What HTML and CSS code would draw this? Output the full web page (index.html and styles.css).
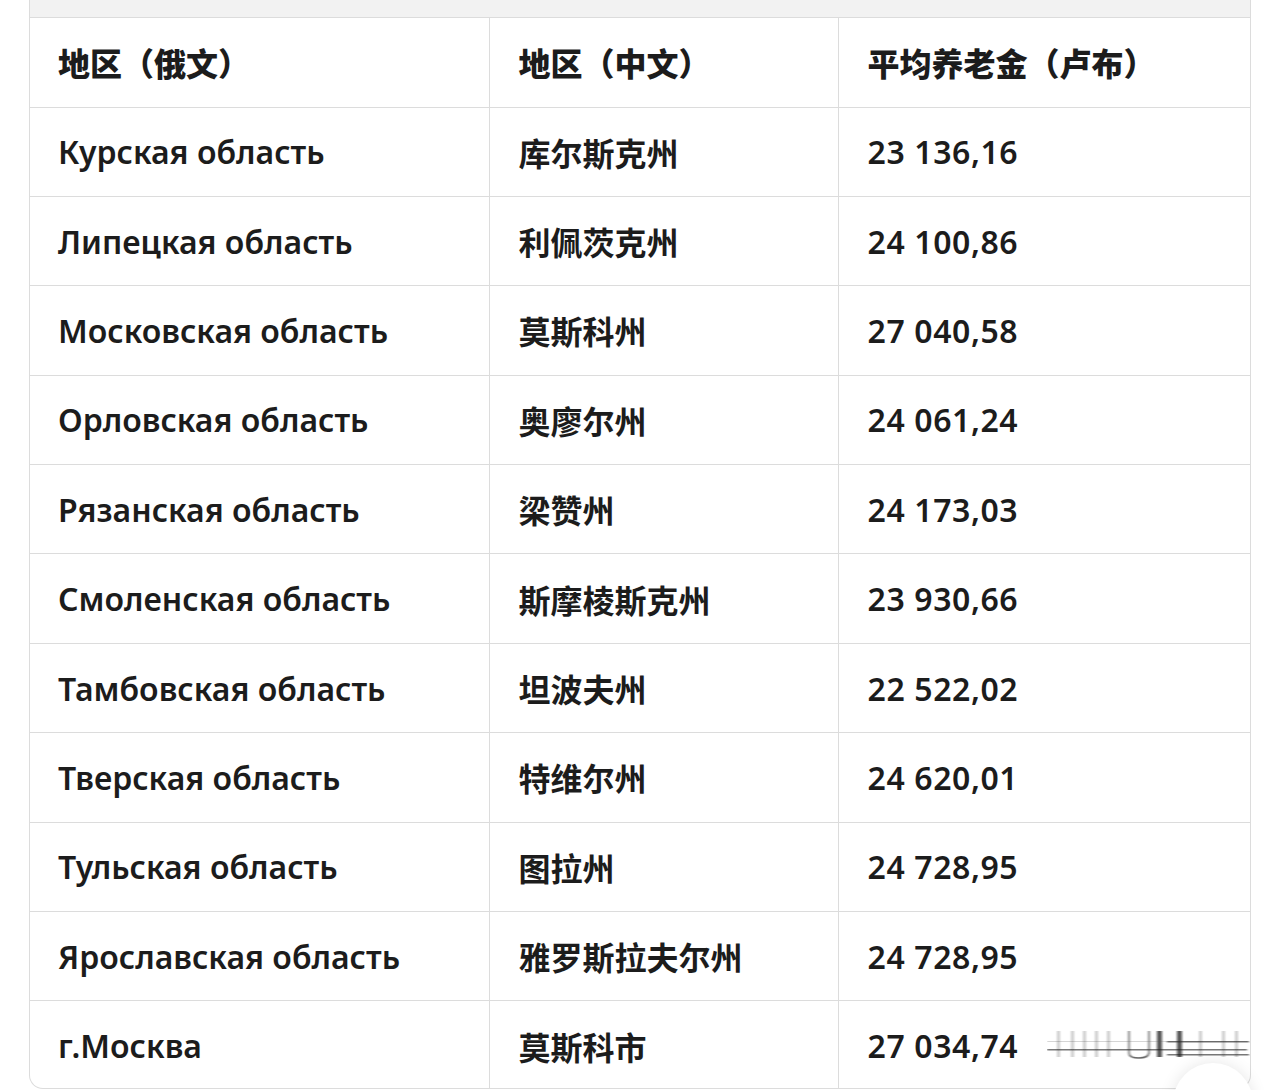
FILE: index.html
```html
<!DOCTYPE html>
<html lang="zh">
<head>
<meta charset="utf-8">
<link rel="stylesheet" href="styles.css">
<title>养老金</title>
</head>
<body>
<div class="card">
  <div class="band"></div>
  <table class="tbl">
    <colgroup><col class="c1"><col class="c2"><col class="c3"></colgroup>
    <thead>
      <tr><th>地区（俄文）</th><th>地区（中文）</th><th>平均养老金（卢布）</th></tr>
    </thead>
    <tbody>
      <tr><td>Курская область</td><td>库尔斯克州</td><td class="num">23 136,16</td></tr>
      <tr><td>Липецкая область</td><td>利佩茨克州</td><td class="num">24 100,86</td></tr>
      <tr><td>Московская область</td><td>莫斯科州</td><td class="num">27 040,58</td></tr>
      <tr><td>Орловская область</td><td>奥廖尔州</td><td class="num">24 061,24</td></tr>
      <tr><td>Рязанская область</td><td>梁赞州</td><td class="num">24 173,03</td></tr>
      <tr><td>Смоленская область</td><td>斯摩棱斯克州</td><td class="num">23 930,66</td></tr>
      <tr><td>Тамбовская область</td><td>坦波夫州</td><td class="num">22 522,02</td></tr>
      <tr><td>Тверская область</td><td>特维尔州</td><td class="num">24 620,01</td></tr>
      <tr><td>Тульская область</td><td>图拉州</td><td class="num">24 728,95</td></tr>
      <tr><td>Ярославская область</td><td>雅罗斯拉夫尔州</td><td class="num">24 728,95</td></tr>
      <tr class="last"><td>г.Москва</td><td>莫斯科市</td><td class="num">27 034,74</td></tr>
    </tbody>
  </table>
  <svg class="mark" width="210" height="40" viewBox="0 0 210 40">
    <defs>
      <filter id="blur" x="-5%" y="-20%" width="110%" height="140%">
        <feGaussianBlur stdDeviation="1.2 0.6"/>
      </filter>
    </defs>
    <g filter="url(#blur)">
      <g fill="#555" opacity="0.3">
        <rect x="10" y="6" width="3" height="26"/>
        <rect x="24" y="6" width="3" height="26"/>
        <rect x="36" y="6" width="3" height="26"/>
        <rect x="48" y="6" width="3" height="26"/>
        <rect x="60" y="6" width="3" height="26"/>
        <rect x="152" y="6" width="3" height="26"/>
        <rect x="175" y="6" width="3" height="26"/>
        <rect x="188" y="6" width="3" height="26"/>
      </g>
      <g fill="#111" opacity="0.7">
        <rect x="110" y="6" width="5" height="26"/>
        <rect x="130" y="6" width="5" height="26"/>
      </g>
      <path d="M82 6 V28 Q82 33 92 33 Q101 33 102 28 V6" fill="none" stroke="#222" stroke-width="1.5" opacity="0.7"/>
      <rect x="0" y="24" width="200" height="1.5" fill="#222" opacity="0.6"/>
      <rect x="0" y="16" width="200" height="1" fill="#555" opacity="0.25"/>
      <rect x="120" y="16" width="82" height="1.5" fill="#222" opacity="0.6"/>
      <rect x="120" y="29" width="82" height="1.5" fill="#222" opacity="0.6"/>
    </g>
  </svg>
</div>
<div class="fab"></div>
</body>
</html>
```
FILE: styles.css
```css
html, body {
  margin: 0;
  padding: 0;
  background: #ffffff;
}
body {
  position: relative;
  width: 1280px;
  height: 1090px;
  overflow: hidden;
  font-family: "Noto Sans", "Noto Sans CJK SC", sans-serif;
  color: #1c1c1c;
}
.card {
  position: relative;
  margin-left: 29px;
  width: 1222px;
  height: 1089px;
  border: 1px solid #dcdcdc;
  border-top: none;
  border-radius: 0 0 14px 14px;
  overflow: hidden;
  box-sizing: border-box;
}
.band {
  height: 17px;
  background: #f2f2f2;
  border-bottom: 1px solid #dcdcdc;
}
.tbl {
  width: 100%;
  border-collapse: collapse;
  table-layout: fixed;
}
.c1 { width: 459px; }
.c2 { width: 349px; }
.c3 { width: auto; }
.tbl th, .tbl td {
  text-align: left;
  padding: 0 0 0 28px;
  height: 89.4px;
  box-sizing: border-box;
  border-bottom: 1px solid #dcdcdc;
  border-left: 1px solid #dcdcdc;
  font-size: 32px;
  font-weight: 600;
  white-space: nowrap;
  vertical-align: middle;
}
.tbl th:first-child, .tbl td:first-child { border-left: none; }
.tbl th { font-weight: 800; height: 89px; }
.tbl td + td, .tbl th + th { padding-left: 29px; }
.tbl td.num { letter-spacing: 0.6px; }
.tbl tr.last td { border-bottom: none; }
.mark {
  position: absolute;
  left: 1017px;
  top: 1025px;
}
.fab {
  position: absolute;
  left: 1173px;
  top: 1063px;
  width: 80px;
  height: 80px;
  border-radius: 50%;
  background: #fff;
  box-shadow: 0 0 16px rgba(0,0,0,0.10);
}
```
